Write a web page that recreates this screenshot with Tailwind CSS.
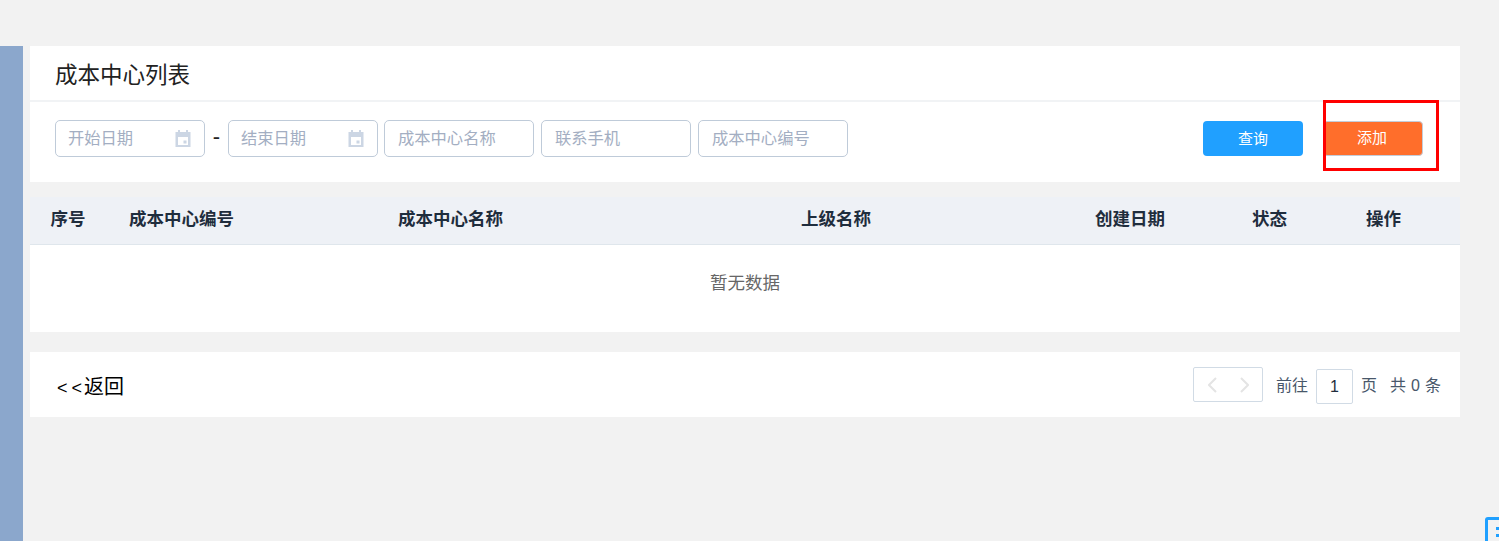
<!DOCTYPE html>
<html lang="zh-CN">
<head>
    <meta charset="UTF-8">
    <title>成本中心列表</title>
    <script src="https://cdn.jsdelivr.net/npm/@tailwindcss/browser@4"></script>
</head>
<body class="bg-[#f2f2f2] h-[541px] overflow-hidden relative font-['Liberation_Sans','Noto_Sans_CJK_SC',sans-serif]">
    <div class="flex pt-[46px] h-full">
        <aside class="w-[23px] bg-[#8ba7cc] shrink-0"></aside>
        <main class="w-[1430px] ml-[7px]">
            <!-- 标题和筛选 -->
            <section class="bg-white">
                <h1 class="h-[56px] pl-[25px] pt-[12px] border-b-2 border-[#f1f3f5] text-[22.5px] leading-[36px] text-[#222]">成本中心列表</h1>
                <div class="h-[80px] pl-[25px] pt-[18px] flex items-start">
                    <div class="w-[150px] h-[37px] border border-[#bfcbd9] rounded-[5px] flex items-center justify-between pl-[12px] pr-[13px] text-[16.3px] text-[#a3aec2]">
                        <span>开始日期</span>
                        <svg class="w-[16px] h-[17px]" viewBox="0 0 16 17" fill="#ccd6e4"><path d="M1 2h2V0h2v2h6V0h2v2h2.500v15H.5V2zM3 7v8h10V7zM8.500 10.500h3v3h-3z" fill-rule="evenodd"/></svg>
                    </div>
                    <span class="w-[23px] h-[37px] text-center text-[22px] leading-[33px] text-[#222]">-</span>
                    <div class="w-[150px] h-[37px] border border-[#bfcbd9] rounded-[5px] flex items-center justify-between pl-[12px] pr-[13px] text-[16.3px] text-[#a3aec2]">
                        <span>结束日期</span>
                        <svg class="w-[16px] h-[17px]" viewBox="0 0 16 17" fill="#ccd6e4"><path d="M1 2h2V0h2v2h6V0h2v2h2.500v15H.5V2zM3 7v8h10V7zM8.500 10.500h3v3h-3z" fill-rule="evenodd"/></svg>
                    </div>
                    <div class="w-[150px] h-[37px] ml-[6px] border border-[#bfcbd9] rounded-[5px] flex items-center pl-[13px] text-[16.3px] text-[#a3aec2]">成本中心名称</div>
                    <div class="w-[150px] h-[37px] ml-[7px] border border-[#bfcbd9] rounded-[5px] flex items-center pl-[13px] text-[16.3px] text-[#a3aec2]">联系手机</div>
                    <div class="w-[150px] h-[37px] ml-[7px] border border-[#bfcbd9] rounded-[5px] flex items-center pl-[13px] text-[16.3px] text-[#a3aec2]">成本中心编号</div>
                    <button class="w-[100px] h-[35px] mt-px pt-px ml-auto bg-[#20a0ff] rounded-[4px] text-white text-[15px]">查询</button>
                    <button class="w-[100px] h-[35px] mt-px pr-[2px] ml-[20px] mr-[37px] bg-[#ff6e2b] rounded-[4px] border border-[#c4ccd8] text-white text-[15px]">添加</button>
                </div>
            </section>

            <!-- 表格 -->
            <section class="mt-[15px] bg-white">
                <div class="h-[48px] pb-[3px] bg-[#eef1f6] border-b border-[#dfe6ec] flex items-center text-[17.5px] font-bold text-[#1f2d3d]">
                    <span class="w-[76px] text-center">序号</span>
                    <span class="w-[269px] pl-[23px]">成本中心编号</span>
                    <span class="w-[426px] pl-[23px]">成本中心名称</span>
                    <span class="w-[294px]">上级名称</span>
                    <span class="w-[157px]">创建日期</span>
                    <span class="w-[114px]">状态</span>
                    <span class="flex-1">操作</span>
                </div>
                <div class="h-[87px] flex items-start justify-center pt-[24px] text-[17.5px] leading-[28px] text-[#666]">暂无数据</div>
            </section>

            <!-- 返回和分页 -->
            <section class="mt-[20px] h-[65px] bg-white flex items-center pl-[27px] pr-[19px]">
                <a class="mt-[4px] text-[20px] text-black"><span class="text-[18px] tracking-[4px]">&lt;</span><span class="text-[18px] tracking-[2px]">&lt;</span>返回</a>
                <div class="ml-auto flex items-center text-[16px] text-[#48576a]">
                    <div class="w-[70px] h-[35px] border border-[#d1dbe5] rounded-[2px] flex items-center justify-between pl-[14px] pr-[13px]">
                        <svg class="w-[9px] h-[16px]" viewBox="0 0 9 16" fill="none" stroke="#e4e4e4" stroke-width="2"><path d="M8 1 1 8l7 7"/></svg>
                        <svg class="w-[9px] h-[16px]" viewBox="0 0 9 16" fill="none" stroke="#e4e4e4" stroke-width="2"><path d="m1 1 7 7-7 7"/></svg>
                    </div>
                    <span class="ml-[13px] mt-[2px]">前往</span>
                    <div class="w-[37px] h-[35px] mt-[4px] ml-[8px] border border-[#d1dbe5] rounded-[2px] flex items-center justify-center text-[16px] text-[#1f2d3d]">1</div>
                    <span class="ml-[8px] mt-[2px]">页</span>
                    <span class="ml-[13px] mt-[2px] [word-spacing:0.6px]">共 0 条</span>
                </div>
            </section>
        </main>
    </div>

    <!-- 红框标注和右下角图标 -->
    <div class="absolute left-[1323px] top-[100px] w-[116px] h-[71px] border-[3px] border-[#ff0000]"></div>
    <div class="absolute left-[1485px] top-[517px] w-[30px] h-[40px] border-[3px] border-[#20a0ff] rounded-[3px]"></div>
    <div class="absolute left-[1496px] top-[527px] w-[3px] h-[3px] bg-[#20a0ff]"></div>
    <div class="absolute left-[1496px] top-[534px] w-[3px] h-[3px] bg-[#20a0ff]"></div>
</body>
</html>
